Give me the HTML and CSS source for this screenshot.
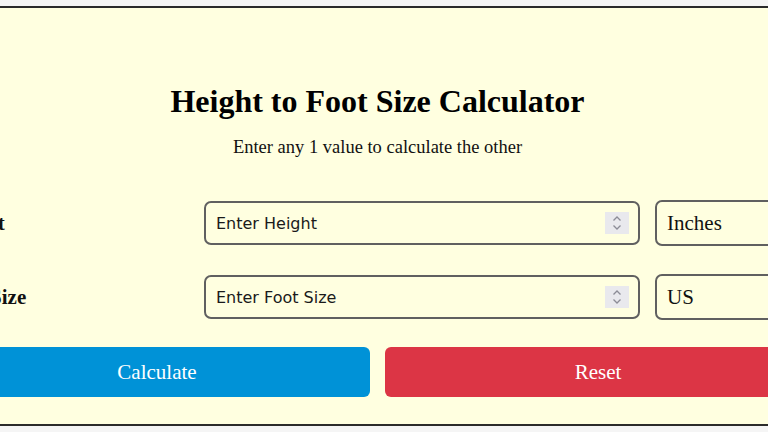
FILE: index.html
```html
<!DOCTYPE html>
<html lang="en">
<head>
  <meta charset="UTF-8">
  <title>Height to Foot Size Calculator</title>
  <link rel="stylesheet" href="styles.css">
</head>
<body>

<div class="calculadora">
  <h1>Height to Foot Size Calculator</h1>
  <p class="intro">Enter any 1 value to calculate the other</p>

  <div class="fila">
    <label for="altura">Height</label>
    <div class="campo">
      <input type="number" id="altura" placeholder="Enter Height">
      <span class="flechas">
        <svg width="24" height="22" viewBox="0 0 24 22"><path d="M8.5 8.5 L12 5 L15.5 8.5 M8.5 13.5 L12 17 L15.5 13.5" fill="none" stroke="#8c8c96" stroke-width="1.3"/></svg>
      </span>
    </div>
    <select id="unidad-altura">
      <option>Inches</option>
      <option>Centimeters</option>
    </select>
  </div>

  <div class="fila">
    <label for="pie">Foot Size</label>
    <div class="campo">
      <input type="number" id="pie" placeholder="Enter Foot Size">
      <span class="flechas">
        <svg width="24" height="22" viewBox="0 0 24 22"><path d="M8.5 8.5 L12 5 L15.5 8.5 M8.5 13.5 L12 17 L15.5 13.5" fill="none" stroke="#8c8c96" stroke-width="1.3"/></svg>
      </span>
    </div>
    <select id="unidad-pie">
      <option>US</option>
      <option>UK</option>
      <option>EU</option>
    </select>
  </div>

  <div class="botones">
    <button class="boton calcular">Calculate</button>
    <button class="boton borrar">Reset</button>
  </div>
</div>

</body>
</html>
```

FILE: styles.css
```css
html, body {
  overflow-x: hidden;
}

body {
  margin: 0;
  background: #f5f5f5;
  font-family: 'Liberation Serif', 'Times New Roman', serif;
  color: #111;
}

.calculadora {
  width: 867px;
  margin: 6px 0 0 -78px;
  padding: 75px 20px 27px;
  background: #ffffe0;
  border: 2px solid #2b2b2b;
}

h1 {
  margin: 0;
  text-align: center;
  font-size: 32px;
  line-height: 37px;
  color: #000;
}

.intro {
  margin: 17px 0 0;
  text-align: center;
  font-size: 18.5px;
  line-height: 21px;
}

.fila {
  display: grid;
  grid-template-columns: 245px 436px 1fr;
  column-gap: 15px;
  align-items: center;
  height: 46px;
  margin-top: 28px;
}

.fila:first-of-type {
  margin-top: 42px;
}

.fila label {
  font-size: 21px;
  font-weight: bold;
}

.campo {
  display: flex;
  align-items: center;
  height: 44px;
  box-sizing: border-box;
  border: 2px solid #606060;
  border-radius: 7px;
}

.campo input {
  flex: 1;
  min-width: 0;
  height: 100%;
  padding: 0 0 0 10px;
  border: none;
  background: transparent;
  font-family: 'DejaVu Sans', Verdana, sans-serif;
  font-size: 16px;
  color: #1a1a1a;
  outline: none;
  -moz-appearance: textfield;
}

.campo input::placeholder {
  color: #1a1a1a;
}

.campo input::-webkit-inner-spin-button,
.campo input::-webkit-outer-spin-button {
  -webkit-appearance: none;
  margin: 0;
}

.flechas {
  display: block;
  width: 24px;
  height: 22px;
  margin-right: 9px;
  background: #e9e9ed;
}

.flechas svg {
  display: block;
}

select {
  height: 46px;
  box-sizing: border-box;
  padding: 0 0 0 10px;
  border: 2px solid #606060;
  border-radius: 7px;
  background: transparent;
  font-family: 'Liberation Serif', 'Times New Roman', serif;
  font-size: 21px;
  color: #111;
  -webkit-appearance: none;
  appearance: none;
}

.botones {
  display: grid;
  grid-template-columns: 1fr 1fr;
  column-gap: 15px;
  margin-top: 27px;
}

.boton {
  height: 50px;
  border: none;
  border-radius: 6px;
  color: white;
  font-family: 'Liberation Serif', 'Times New Roman', serif;
  font-size: 21px;
  cursor: pointer;
}

.calcular {
  background: #0092d7;
}

.borrar {
  background: #dc3545;
}
```
